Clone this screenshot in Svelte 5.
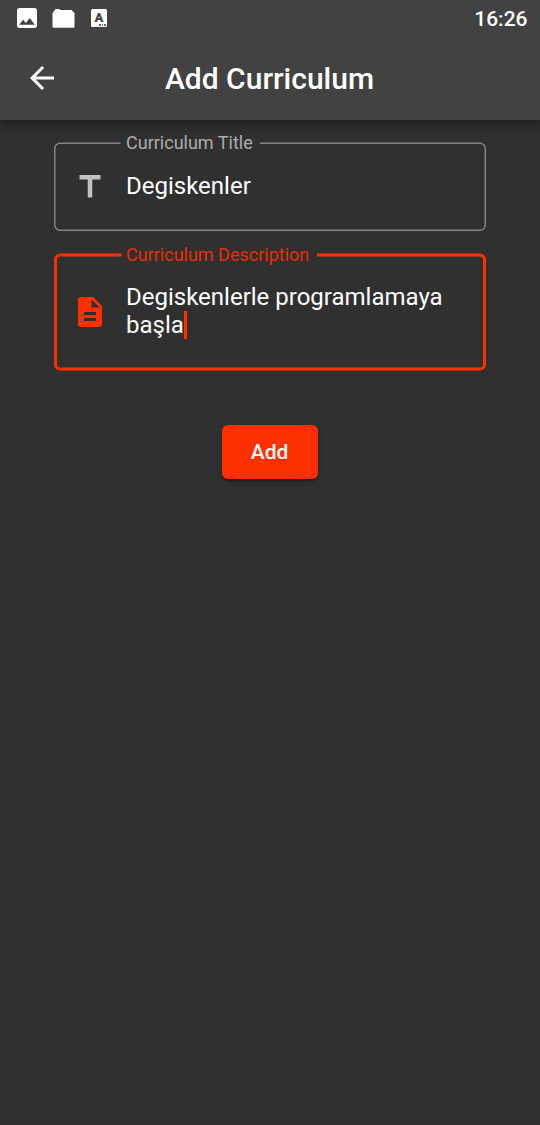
<script>
  const fields = [
    {
      label: 'Curriculum Title',
      value: 'Degiskenler',
      icon: 'M5 4v3h5.5v12h3V7H19V4z',
      outline: 'M66.5 1.25H6A5.25 5.25 0 0 0 .75 6.5V83A5.25 5.25 0 0 0 6 88.25H426A5.25 5.25 0 0 0 431.25 83V6.5A5.25 5.25 0 0 0 426 1.25H206',
      kind: 'title'
    },
    {
      label: 'Curriculum Description',
      value: 'Degiskenlerle programlamaya başla',
      icon: 'M14 2H6c-1.1 0-1.99.9-1.99 2L4 20c0 1.1.89 2 1.99 2H18c1.1 0 2-.9 2-2V8l-6-6zm2 16H8v-2h8v2zm0-4H8v-2h8v2zm-3-5V3.5L18.5 9H13z',
      outline: 'M67.5 2H6A4.5 4.5 0 0 0 1.5 6.5V111.5A4.5 4.5 0 0 0 6 116H426A4.5 4.5 0 0 0 430.5 111.5V6.5A4.5 4.5 0 0 0 426 2H263',
      kind: 'description'
    }
  ];
</script>

<div class="screen">
  <header>
    <div class="status">
      <svg class="picture" width="20" height="20" viewBox="3 3 18 18"><path d="M21 19V5c0-1.1-.9-2-2-2H5c-1.1 0-2 .9-2 2v14c0 1.1.9 2 2 2h14c1.1 0 2-.9 2-2zM8.500 13.500l2.500 3.010L14.500 12l4.500 6H5l3.500-4.500z" /></svg>
      <svg class="folder" width="23" height="20" viewBox="0 0 23 20"><path d="M2.800 2Q3.300 1 4.300 1H7l1.500 1H19.500L22.500 5V18.500Q22.500 19.700 21.300 19.700H1.700Q.5 19.700 .5 18.500V5Z" /></svg>
      <div class="glyph"><span>A</span><i></i></div>
      <time>16:26</time>
    </div>
    <div class="bar">
      <svg width="36" height="36" viewBox="0 0 24 24"><path d="M20 11H7.830l5.590-5.590L12 4l-8 8 8 8 1.410-1.410L7.830 13H20v-2z" /></svg>
      <h1>Add Curriculum</h1>
    </div>
  </header>

  <main>
    {#each fields as field}
      <section class="field {field.kind}">
        <svg class="outline"><path d={field.outline} /></svg>
        <span class="label">{field.label}</span>
        <svg class="icon" width="36" height="36" viewBox="0 0 24 24"><path d={field.icon} /></svg>
        <p>{field.value}{#if field.kind === 'description'}<i class="caret"></i>{/if}</p>
      </section>
    {/each}
    <button>Add</button>
  </main>
</div>

<style>
  :global(body) {
    margin: 0;
    background: #303030;
  }
  .screen {
    height: 1125px;
    background: #303030;
    color: #fff;
    font-family: Roboto, sans-serif;
    overflow: hidden;
  }
  svg {
    display: block;
    fill: #fff;
    flex: none;
  }
  header {
    height: 120px;
    background: #424242;
    box-shadow: 0 3px 6px -1.5px rgba(0, 0, 0, .2), 0 6px 7.5px rgba(0, 0, 0, .14), 0 1.5px 15px rgba(0, 0, 0, .12);
  }
  .status {
    height: 36px;
    display: flex;
    align-items: flex-start;
    padding: 0 12.5px 0 17px;
    box-sizing: border-box;
  }
  .picture { margin-top: 8px; }
  .folder { margin: 8px 0 0 15px; }
  .glyph {
    width: 16px;
    height: 18px;
    margin: 9px 0 0 16px;
    border-radius: 1.5px;
    background: #fff;
    color: #424242;
    text-align: center;
    font: 900 13px/17px Roboto, sans-serif;
    position: relative;
  }
  .glyph i {
    position: absolute;
    right: 1px;
    bottom: 1.5px;
    width: 7px;
    height: 1.5px;
    background: repeating-linear-gradient(90deg, #666 0 1.5px, #fff 1.5px 2.5px);
  }
  time {
    margin-left: auto;
    font-size: 21px;
    font-weight: 500;
    line-height: 38px;
  }
  .bar {
    height: 84px;
    display: grid;
    grid-template-columns: 60px 1fr 61px;
    align-items: center;
  }
  .bar svg { margin-left: 24px; }
  h1 {
    margin: 2px 0 0;
    text-align: center;
    font-size: 30px;
    font-weight: 500;
    line-height: 36px;
  }
  main {
    display: flex;
    flex-direction: column;
    align-items: center;
    padding-top: 22px;
  }
  .field {
    width: 432px;
    height: 89px;
    position: relative;
    display: flex;
    align-items: center;
    box-sizing: border-box;
    padding-left: 18px;
    color: #838383;
  }
  .description {
    height: 117px;
    margin-top: 22px;
    color: #ff3000;
  }
  .outline {
    position: absolute;
    inset: 0;
    width: 100%;
    height: 100%;
    overflow: visible;
    fill: none;
    stroke: currentColor;
    stroke-width: 1.5px;
  }
  .description .outline { stroke-width: 3px; }
  .icon { fill: #c1c1c1; }
  .description .icon { fill: #ff3000; }
  .label {
    position: absolute;
    left: 72px;
    top: -10px;
    font-size: 18px;
    line-height: 22px;
    white-space: nowrap;
    color: #acacac;
  }
  .description .label {
    color: #ea2e03;
    top: -9px;
  }
  p {
    margin: -2px 0 0 18px;
    width: 342px;
    font-size: 24px;
    line-height: 28px;
    color: #fff;
  }
  .description p { margin-top: -1px; }
  .caret {
    display: inline-block;
    width: 3px;
    height: 28px;
    margin-right: -3px;
    vertical-align: -6px;
    margin-top: -8px;
    background: #ff3000;
  }
  button {
    width: 96px;
    height: 54px;
    margin: 54.5px 0 0;
    padding: 0 1px 0 0;
    border: 0;
    border-radius: 6px;
    background: #ff3000;
    color: #fff;
    font: 500 21px/54px Roboto, sans-serif;
    box-shadow: 0 4.5px 1.5px -3px rgba(0, 0, 0, .2), 0 3px 3px rgba(0, 0, 0, .14), 0 1.5px 7.5px rgba(0, 0, 0, .12);
  }
</style>
